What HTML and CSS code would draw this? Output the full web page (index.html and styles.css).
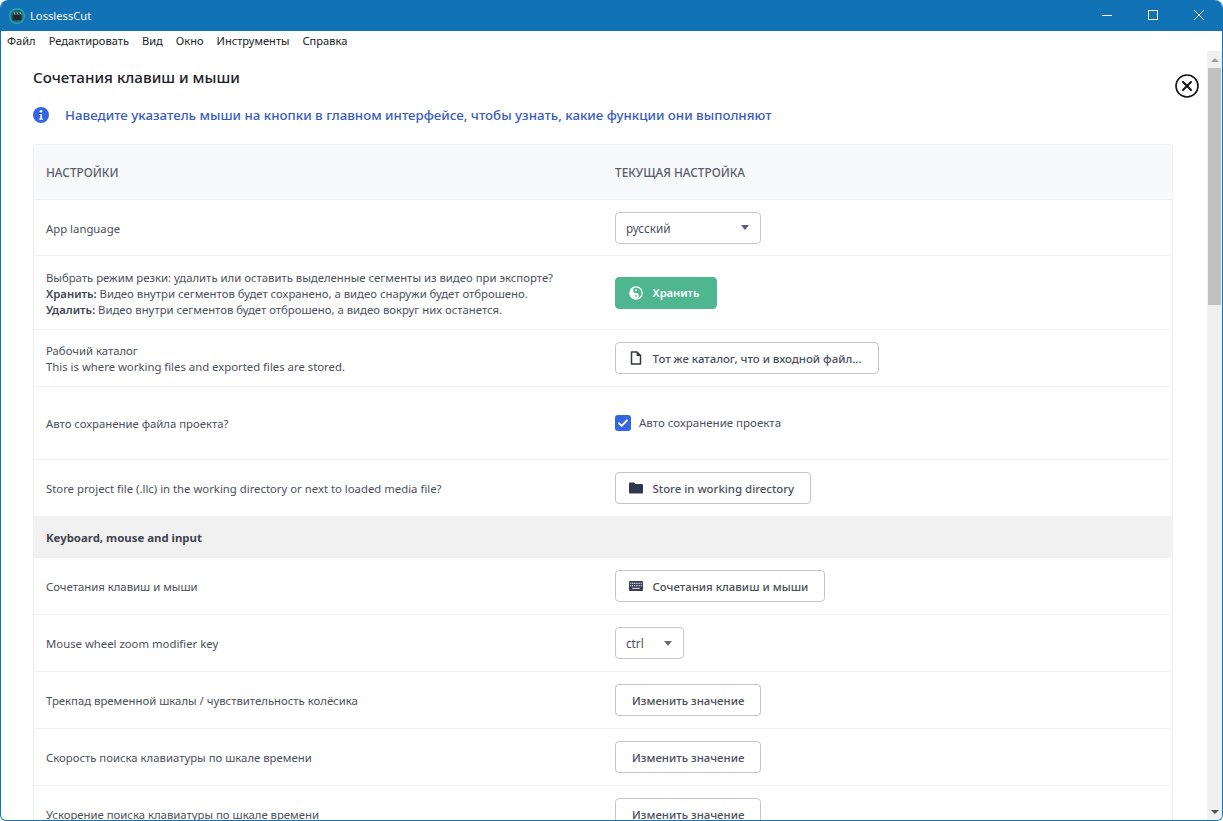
FILE: index.html
```html
<!DOCTYPE html>
<html lang="ru">
  <head>
    <meta charset="UTF-8" />
    <title>LosslessCut</title>
    <link rel="stylesheet" href="styles.css">
  </head>
  <body>
    <div class="titlebar">
      <div class="app-title">
        <svg class="app-icon" viewBox="0 0 16 16" width="16" height="16">
          <circle cx="8" cy="8" r="8" fill="#2ba6ad" />
          <circle cx="8" cy="8" r="6.6" fill="#17707c" />
          <rect x="3.5" y="6.8" width="9" height="5.4" rx="0.6" fill="#23262b" />
          <path d="M3.5 4.2h9v2.2h-9z" fill="#3a3f46" />
          <path d="M5 4.2l1 2.2M8 4.2l1 2.2M11 4.2l1 2.2" stroke="#d8dde2" stroke-width="0.8" />
        </svg>
        <span>LosslessCut</span>
      </div>
      <div class="window-btns">
        <svg viewBox="0 0 46 31" width="46" height="31"><path d="M18 15.5h10" stroke="#fff" /></svg>
        <svg viewBox="0 0 46 31" width="46" height="31"><rect x="18.5" y="10.5" width="9" height="9" fill="none" stroke="#fff" /></svg>
        <svg viewBox="0 0 46 31" width="46" height="31"><path d="M18 10l10 10M28 10L18 20" stroke="#fff" /></svg>
      </div>
    </div>

    <div class="menubar">
      <span>Файл</span>
      <span>Редактировать</span>
      <span>Вид</span>
      <span>Окно</span>
      <span>Инструменты</span>
      <span>Справка</span>
    </div>

    <div class="main">
      <div class="content">
        <svg class="close" viewBox="0 0 24 24" width="24" height="24">
          <circle cx="12" cy="12" r="11" fill="#fff" stroke="#111" stroke-width="1.6" />
          <path d="M8 8l8 8M16 8l-8 8" stroke="#111" stroke-width="2" stroke-linecap="round" />
        </svg>

        <h1>Сочетания клавиш и мыши</h1>

        <div class="hint">
          <svg viewBox="0 0 16 16" width="16" height="16">
            <circle cx="8" cy="8" r="8" fill="#3366e0" />
            <circle cx="8" cy="4.3" r="1.3" fill="#fff" />
            <path d="M6.3 6.9h2.6v4.6h1v1.2H6.2v-1.2h1.1V8.1h-1z" fill="#fff" />
          </svg>
          <span>Наведите указатель мыши на кнопки в главном интерфейсе, чтобы узнать, какие функции они выполняют</span>
        </div>

        <div class="table">
          <div class="row head">
            <div>НАСТРОЙКИ</div>
            <div>ТЕКУЩАЯ НАСТРОЙКА</div>
          </div>

          <div class="row h56">
            <div>App language</div>
            <div>
              <div class="select lang">русский<i class="caret dark"></i></div>
            </div>
          </div>

          <div class="row h74">
            <div>
              Выбрать режим резки: удалить или оставить выделенные сегменты из видео при экспорте?<br />
              <b>Хранить:</b> Видео внутри сегментов будет сохранено, а видео снаружи будет отброшено.<br />
              <b>Удалить:</b> Видео внутри сегментов будет отброшено, а видео вокруг них останется.
            </div>
            <div>
              <button class="btn green">
                <svg viewBox="0 0 14 14" width="14" height="14">
                  <circle cx="7" cy="7" r="6.8" fill="#fff" />
                  <path d="M7 1.4a5.6 5.6 0 0 1 0 11.2a2.8 2.8 0 0 0 0-5.6a2.8 2.8 0 0 1 0-5.6z" fill="#4fb78f" />
                  <circle cx="7" cy="9.8" r="0.9" fill="#4fb78f" />
                  <circle cx="7" cy="4.2" r="0.9" fill="#fff" />
                </svg>
                Хранить
              </button>
            </div>
          </div>

          <div class="row h57">
            <div>Рабочий каталог<br />This is where working files and exported files are stored.</div>
            <div>
              <button class="btn">
                <svg viewBox="0 0 14 14" width="14" height="14">
                  <path d="M2.5 1h5.5l3.5 3.5V13h-9z" fill="none" stroke="#33363f" stroke-width="1.5" stroke-linejoin="round" />
                  <path d="M7.6 1v3.9h3.9z" fill="#33363f" />
                </svg>
                Тот же каталог, что и входной файл...
              </button>
            </div>
          </div>

          <div class="row h73">
            <div>Авто сохранение файла проекта?</div>
            <div class="check-cell">
              <span class="checkbox">
                <svg viewBox="0 0 16 16" width="16" height="16"><path d="M4 8.3l2.7 2.6L12 5.4" fill="none" stroke="#fff" stroke-width="2" stroke-linecap="round" stroke-linejoin="round" /></svg>
              </span>
              Авто сохранение проекта
            </div>
          </div>

          <div class="row h57">
            <div>Store project file (.llc) in the working directory or next to loaded media file?</div>
            <div>
              <button class="btn">
                <svg viewBox="0 0 14 14" width="14" height="14">
                  <path d="M0 2.5a1 1 0 0 1 1-1h4l1.3 1.4H13a1 1 0 0 1 1 1V11.5a1 1 0 0 1-1 1H1a1 1 0 0 1-1-1z" fill="#33374d" />
                </svg>
                Store in working directory
              </button>
            </div>
          </div>

          <div class="section">Keyboard, mouse and input</div>

          <div class="row h57">
            <div>Сочетания клавиш и мыши</div>
            <div>
              <button class="btn">
                <svg viewBox="0 0 14 14" width="14" height="14">
                  <rect y="2" width="14" height="10" rx="1" fill="#3b3f55" />
                  <path d="M1.2 4.4h11.6M1.2 6.6h11.6" stroke="#d4d6df" stroke-width="1.1" stroke-dasharray="1.1 0.7" />
                  <path d="M3.2 9.4h7.6" stroke="#d4d6df" stroke-width="1.1" />
                </svg>
                Сочетания клавиш и мыши
              </button>
            </div>
          </div>

          <div class="row h57">
            <div>Mouse wheel zoom modifier key</div>
            <div>
              <div class="select ctrl">ctrl<i class="caret"></i></div>
            </div>
          </div>

          <div class="row h57">
            <div>Трекпад временной шкалы / чувствительность колёсика</div>
            <div><button class="btn wide">Изменить значение</button></div>
          </div>

          <div class="row h57">
            <div>Скорость поиска клавиатуры по шкале времени</div>
            <div><button class="btn wide">Изменить значение</button></div>
          </div>

          <div class="row h57">
            <div>Ускорение поиска клавиатуры по шкале времени</div>
            <div><button class="btn wide">Изменить значение</button></div>
          </div>
        </div>
      </div>

      <div class="scrollbar">
        <i class="arrow up"></i>
        <div class="thumb"></div>
        <div class="track"></div>
        <i class="arrow down"></i>
      </div>
    </div>
  </body>
</html>
```

FILE: styles.css
```css
* {
  box-sizing: border-box;
}
html, body {
  margin: 0;
  height: 100%;
  overflow: hidden;
}
body {
  display: flex;
  flex-direction: column;
  font-family: "Noto Sans", "Open Sans", sans-serif;
  font-size: 11.33px;
  color: #4b4f58;
  background: #fff;
  border: solid #1173b5;
  border-width: 0 1px 1px 1px;
  border-radius: 8px 8px 6px 6px;
}

/* title bar */
.titlebar {
  flex: none;
  height: 31px;
  margin: 0 -1px;
  background: #1173b5;
  color: #fff;
  display: flex;
  justify-content: space-between;
  align-items: center;
  padding: 0 1px 0 9px;
  border-radius: 8px 8px 0 0;
}
.app-title {
  display: flex;
  align-items: center;
  gap: 5px;
  font-size: 11.2px;
}
.window-btns {
  display: flex;
  height: 31px;
}

/* menu */
.menubar {
  flex: none;
  height: 20px;
  display: flex;
  align-items: center;
  gap: 13px;
  padding: 0 0 2px 6px;
  font-size: 11.1px;
  color: #222;
}

.main {
  flex: 1;
  display: flex;
  min-height: 0;
}
.content {
  flex: 1;
  min-width: 0;
  position: relative;
  padding: 16px 34px 0 32px;
  overflow: hidden;
}
.close {
  position: absolute;
  top: 23px;
  right: 8px;
}
h1 {
  margin: 0;
  font-size: 15.15px;
  line-height: 20px;
  font-weight: 500;
  color: #1e2027;
}
.hint {
  display: flex;
  align-items: center;
  gap: 16px;
  height: 18px;
  margin-top: 19px;
  font-size: 13.3px;
  font-weight: 500;
  color: #3a5cbf;
}

/* table */
.table {
  margin-top: 20px;
  border: solid #f0f1f3;
  border-width: 1px 1px 0 1px;
  border-radius: 4px 4px 0 0;
}
.row {
  display: grid;
  grid-template-columns: 569px 1fr;
  align-items: center;
  padding-left: 12px;
  border-bottom: 1px solid #f0f1f3;
  line-height: 16px;
}
.row > div:first-child {
  padding-top: 2px;
}
.head {
  height: 55px;
  background: #f8f9fb;
  font-size: 11.8px;
  font-weight: 500;
  color: #5a5f6d;
}
.head > div:first-child {
  padding-top: 0;
}
.h56 { height: 56px; }
.h57 { height: 57px; }
.h73 { height: 73px; }
.h74 { height: 74px; }
.row b {
  font-weight: 600;
  color: #41444f;
}
.section {
  height: 41px;
  display: flex;
  align-items: center;
  padding-left: 12px;
  background: #f1f1f1;
  font-size: 11.4px;
  font-weight: 700;
  color: #41444f;
}

/* controls */
.select {
  height: 32px;
  display: flex;
  align-items: center;
  justify-content: space-between;
  padding: 0 11px 0 10px;
  border: 1px solid #c6c5d3;
  border-radius: 4px;
  font-size: 11.7px;
  color: #4b4f58;
}
.lang { width: 146px; }
.ctrl { width: 69px; }
.caret {
  width: 0;
  height: 0;
  border: 4px solid transparent;
  border-top: 5px solid #6b6b6b;
  border-bottom: 0;
}
.caret.dark {
  border-top-color: #5e5c7e;
}
.btn {
  height: 32px;
  display: inline-flex;
  align-items: center;
  gap: 10px;
  padding: 0 16px 0 12.5px;
  background: #fff;
  border: 1px solid #c4c4cc;
  border-radius: 4px;
  font-family: inherit;
  font-size: 11.42px;
  font-weight: 500;
  color: #4b4f58;
}
.btn.green {
  background: #4fb78f;
  border-color: #4fb78f;
  color: #fff;
  font-size: 11.2px;
  font-weight: 600;
}
.btn.wide {
  padding: 0 16px;
}
.check-cell {
  display: flex;
  align-items: center;
  gap: 8px;
  font-size: 11.5px;
}
.checkbox {
  width: 16px;
  height: 16px;
  background: #3366e0;
  border-radius: 3px;
}
.checkbox svg {
  display: block;
}

/* scrollbar */
.scrollbar {
  flex: none;
  width: 15px;
  background: #f0f0f0;
  display: flex;
  flex-direction: column;
}
.thumb {
  height: 237px;
  margin: 0 1px;
  background: #c1c1c1;
}
.track {
  flex: 1;
}
.arrow {
  flex: none;
  height: 17px;
  display: flex;
  justify-content: center;
  align-items: center;
}
.arrow::after {
  content: "";
  border: 4px solid transparent;
}
.arrow.up::after {
  border-top: 0;
  border-bottom: 4px solid #a3a3a3;
}
.arrow.down::after {
  border-bottom: 0;
  border-top: 4px solid #505050;
}
```
